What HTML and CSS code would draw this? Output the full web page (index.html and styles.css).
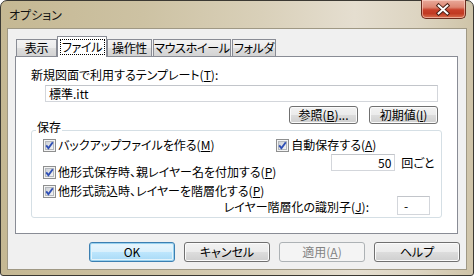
FILE: index.html
```html
<!DOCTYPE html>
<html lang="ja">
<head>
<meta charset="utf-8">
<title>オプション</title>
<link rel="stylesheet" href="styles.css">
</head>
<body>
<svg class="defs" width="0" height="0" aria-hidden="true">
  <defs>
    <linearGradient id="cbg" x1="0" y1="0" x2="1" y2="1">
      <stop offset="0" stop-color="#cbcfd5"/>
      <stop offset="1" stop-color="#f6f6f6"/>
    </linearGradient>
    <symbol id="cb" viewBox="0 0 13 13">
      <rect x="0.5" y="0.5" width="12" height="12" fill="#f4f4f4" stroke="#8e8f8f"/>
      <rect x="2.5" y="2.5" width="8" height="8" fill="url(#cbg)" stroke="#b4b8bd"/>
      <path d="M3.2 6.4 L5.4 9.2 L9.8 3.2" fill="none" stroke="#2f4fb5" stroke-width="1.9"/>
    </symbol>
  </defs>
</svg>
<div class="window">
  <div class="titlebar">
    <span class="title">オプション</span>
    <div class="close">
      <svg width="45" height="19" viewBox="0 0 45 19">
        <path d="M18 5.5 L27 13.5 M27 5.5 L18 13.5" stroke="#4a2016" stroke-width="4" stroke-linecap="square"/>
        <path d="M18 5.5 L27 13.5 M27 5.5 L18 13.5" stroke="#ffffff" stroke-width="2" stroke-linecap="square"/>
      </svg>
    </div>
  </div>
  <div class="client">
    <div class="tabs">
      <div class="tab w-hyoji">表示</div>
      <div class="tab sel w-file"><span class="focus">ファイル</span></div>
      <div class="tab w-sousa">操作性</div>
      <div class="tab w-mouse gap">マウスホイール</div>
      <div class="tab w-folder gap">フォルダ</div>
    </div>
    <div class="panel">
      <div class="tpl-label">新規図面で利用するテンプレート(<u>T</u>):</div>
      <div class="tpl">
        <div class="field">標準.itt</div>
        <div class="tpl-btns">
          <div class="btn small">参照(<u>B</u>)...</div>
          <div class="btn small">初期値(<u>I</u>)</div>
        </div>
      </div>
      <div class="group">
        <div class="group-title">保存</div>
        <div class="group-top">
          <div class="col-left">
            <div class="chk"><svg class="cbx"><use href="#cb"/></svg><span>バックアップファイルを作る(<u>M</u>)</span></div>
            <div class="chk r-save"><svg class="cbx"><use href="#cb"/></svg><span>他形式保存時、親レイヤー名を付加する(<u>P</u>)</span></div>
            <div class="chk r-load"><svg class="cbx"><use href="#cb"/></svg><span>他形式読込時、レイヤーを階層化する(<u>P</u>)</span></div>
          </div>
          <div class="col-right">
            <div class="chk"><svg class="cbx"><use href="#cb"/></svg><span>自動保存する(<u>A</u>)</span></div>
            <div class="count-row">
              <div class="count">50</div>
              <span class="unit">回ごと</span>
            </div>
          </div>
        </div>
        <div class="ident-row">
          <span class="ident-label">レイヤー階層化の識別子(<u>J</u>):</span>
          <div class="ident-input">-</div>
        </div>
      </div>
    </div>
    <div class="buttons">
      <div class="btn big default">OK</div>
      <div class="btn big">キャンセル</div>
      <div class="btn big disabled">適用(<u>A</u>)</div>
      <div class="btn big">ヘルプ</div>
    </div>
  </div>
</div>
</body>
</html>
```

FILE: styles.css
```css
* {
  box-sizing: border-box;
}

body {
  margin: 0;
  width: 474px;
  height: 276px;
  overflow: hidden;
  font-family: "Noto Sans CJK JP", "Noto Sans", sans-serif;
  font-size: 12px;
  line-height: 14px;
  font-feature-settings: "palt" 1;
  color: #000;
  background: #ffffff;
  white-space: nowrap;
}

.defs {
  position: absolute;
  width: 0;
  height: 0;
}

u {
  text-decoration: underline;
  text-underline-offset: 1px;
}

.window {
  width: 474px;
  height: 276px;
  border: 1px solid #3b3933;
  border-radius: 7px 7px 3px 3px;
  background: linear-gradient(to right, #c5b893 0%, #cdc2a3 30%, #d9d0b9 55%, #e5ded0 75%, #ddd5c2 88%, #cfc4a8 100%);
  padding: 0 6px 5px 6px;
  display: flex;
  flex-direction: column;
}

.titlebar {
  height: 27px;
  display: flex;
  justify-content: space-between;
  align-items: flex-start;
}

.title {
  margin: 7px 0 0 2px;
  font-size: 12px;
  line-height: 14px;
  color: #111;
}

.close {
  width: 45px;
  height: 19px;
  margin: -1px 1px 0 0;
  border: 1px solid #6b2c1e;
  border-top: none;
  border-radius: 0 0 5px 5px;
  background: linear-gradient(#e9a99a 0%, #dd8672 40%, #c8402a 55%, #c13a23 75%, #d8704f 100%);
  box-shadow: inset 0 0 0 1px rgba(255, 220, 210, 0.55);
  display: flex;
  overflow: hidden;
}

.close svg {
  display: block;
  margin-left: -1px;
}

.client {
  flex: 1;
  border: 1px solid #9f9884;
  background: #f0f0f0;
  display: flex;
  flex-direction: column;
  padding: 7px 0 7px 0;
}

.tabs {
  display: flex;
  align-items: flex-end;
  height: 20px;
  margin-left: 8px;
}

.tab {
  height: 17px;
  border: 1px solid #898c95;
  border-bottom: none;
  background: linear-gradient(#f3f3f3 0%, #ebebeb 50%, #dedede 50%, #d3d3d3 100%);
  text-align: center;
  line-height: 15px;
  letter-spacing: -0.3px;
}

.tab.gap {
  margin-left: 1px;
}

.w-hyoji { width: 41px; }
.w-file { width: 50px; }
.w-sousa { width: 45px; }
.w-mouse { width: 78px; }
.w-folder { width: 44px; }

.tab.sel {
  height: 21px;
  margin-bottom: -1px;
  background: #ffffff;
  position: relative;
  z-index: 1;
  display: flex;
  justify-content: center;
  padding-top: 2px;
}

.focus {
  display: block;
  width: 45px;
  height: 16px;
  border: 1px dotted #000;
  line-height: 14px;
}

.panel {
  margin: 0 8px 0 7px;
  height: 178px;
  border: 1px solid #898c95;
  background: #ffffff;
}

.tpl-label {
  margin: 11px 0 0 15px;
}

.tpl {
  margin: 3px 19px 0 29px;
}

.field {
  height: 17px;
  border: 1px solid #d3d6db;
  border-top-color: #c2c5ca;
  padding-left: 3px;
  line-height: 15px;
}

.tpl-btns {
  display: flex;
  justify-content: flex-end;
  gap: 11px;
  margin-top: 4px;
}

.btn {
  display: flex;
  align-items: center;
  justify-content: center;
  border: 1px solid #707070;
  border-radius: 3px;
  background: linear-gradient(#f2f2f2 0%, #ebebeb 50%, #dddddd 50%, #cfcfcf 100%);
  box-shadow: inset 0 0 0 1px #fbfbfb;
}

.btn.small {
  width: 69px;
  height: 18px;
}

.btn.big {
  width: 86px;
  height: 20px;
}

.btn.default {
  border-color: #3c7fb1;
  background: linear-gradient(#eaf6fd 0%, #d9f0fc 50%, #bee6fd 50%, #a7d9f5 100%);
  box-shadow: inset 0 0 0 1px #98d1ef, inset 0 0 0 2px #e3f3fb;
}

.btn.disabled {
  border-color: #adb2b5;
  background: #f4f4f4;
  box-shadow: none;
  color: #838383;
}

.group {
  position: relative;
  margin: 6px 15px 0 15px;
  height: 88px;
  border: 1px solid #d5dfe5;
  border-radius: 3px;
  padding: 6px 11px 0 11px;
}

.group-title {
  position: absolute;
  top: -11px;
  left: 4px;
  padding: 0 1px;
  background: #ffffff;
  line-height: 14px;
}

.group-top {
  display: flex;
}

.col-left {
  width: 235px;
}

.col-right {
  flex: 1;
}

.chk {
  display: flex;
  align-items: center;
  height: 16px;
  gap: 2px;
}

.cbx {
  width: 13px;
  height: 13px;
  flex: none;
}

.r-save {
  margin-top: 11px;
}

.r-load {
  margin-top: 3px;
}

.count-row {
  display: flex;
  align-items: center;
  margin-top: 1px;
  padding-left: 55px;
  height: 17px;
}

.count {
  width: 64px;
  height: 17px;
  border: 1px solid #d3d6db;
  border-top-color: #c2c5ca;
  text-align: right;
  padding-right: 3px;
  line-height: 15px;
}

.unit {
  margin-left: 6px;
}

.ident-row {
  display: flex;
  justify-content: flex-end;
  align-items: center;
  margin-top: -3px;
  height: 19px;
}

.ident-label {
  margin-top: 2px;
}

.ident-input {
  width: 33px;
  height: 19px;
  margin-left: 28px;
  border: 1px solid #d3d6db;
  border-top-color: #c2c5ca;
  padding-left: 6px;
  line-height: 17px;
}

.buttons {
  display: flex;
  justify-content: flex-end;
  gap: 9px;
  margin: 8px 6px 0 0;
}
```
